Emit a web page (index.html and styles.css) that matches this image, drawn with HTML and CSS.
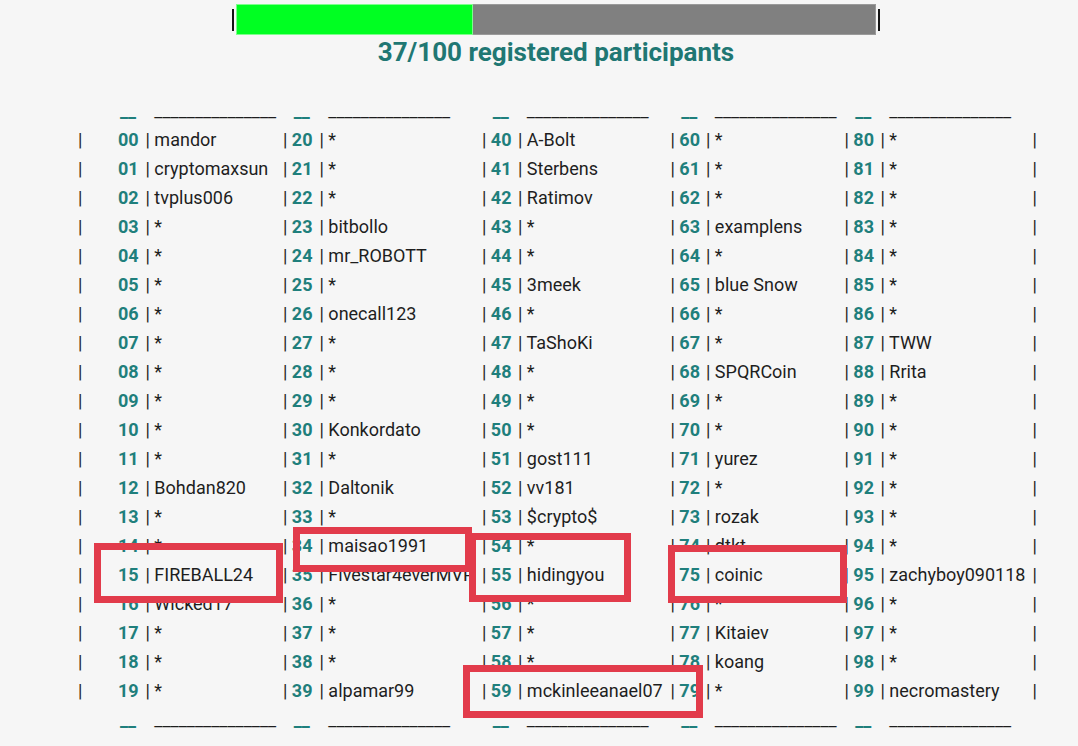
FILE: index.html
```html
<!DOCTYPE html>
<html>
<head>
<meta charset="utf-8">
<link rel="stylesheet" href="styles.css">
</head>
<body>
<div class="page">
  <div class="progress">
    <div class="tick"></div>
    <div class="bar"><div class="fill" style="width:37%"></div></div>
    <div class="tick"></div>
  </div>
  <div class="title">37/100 registered participants</div>
  <div class="board">
    <span></span><span class="n"><b class="u">__</b></span><span class="t"><i class="g">| </i>_______________</span><span class="n"><i class="g">| </i><b class="u">__</b></span><span class="t"><i class="g">| </i>_______________</span><span class="n"><i class="g">| </i><b class="u">__</b></span><span class="t"><i class="g">| </i>_______________</span><span class="n"><i class="g">| </i><b class="u">__</b></span><span class="t"><i class="g">| </i>_______________</span><span class="n"><i class="g">| </i><b class="u">__</b></span><span class="t"><i class="g">| </i>_______________</span><span></span>

    <span class="p">|</span><span class="n"><b>00</b></span><span class="t">| mandor</span><span class="n">| <b>20</b></span><span class="t">| *</span><span class="n">| <b>40</b></span><span class="t">| A-Bolt</span><span class="n">| <b>60</b></span><span class="t">| *</span><span class="n">| <b>80</b></span><span class="t">| *</span><span class="p">|</span>
    <span class="p">|</span><span class="n"><b>01</b></span><span class="t">| cryptomaxsun</span><span class="n">| <b>21</b></span><span class="t">| *</span><span class="n">| <b>41</b></span><span class="t">| Sterbens</span><span class="n">| <b>61</b></span><span class="t">| *</span><span class="n">| <b>81</b></span><span class="t">| *</span><span class="p">|</span>
    <span class="p">|</span><span class="n"><b>02</b></span><span class="t">| tvplus006</span><span class="n">| <b>22</b></span><span class="t">| *</span><span class="n">| <b>42</b></span><span class="t">| Ratimov</span><span class="n">| <b>62</b></span><span class="t">| *</span><span class="n">| <b>82</b></span><span class="t">| *</span><span class="p">|</span>
    <span class="p">|</span><span class="n"><b>03</b></span><span class="t">| *</span><span class="n">| <b>23</b></span><span class="t">| bitbollo</span><span class="n">| <b>43</b></span><span class="t">| *</span><span class="n">| <b>63</b></span><span class="t">| examplens</span><span class="n">| <b>83</b></span><span class="t">| *</span><span class="p">|</span>
    <span class="p">|</span><span class="n"><b>04</b></span><span class="t">| *</span><span class="n">| <b>24</b></span><span class="t">| mr_ROBOTT</span><span class="n">| <b>44</b></span><span class="t">| *</span><span class="n">| <b>64</b></span><span class="t">| *</span><span class="n">| <b>84</b></span><span class="t">| *</span><span class="p">|</span>
    <span class="p">|</span><span class="n"><b>05</b></span><span class="t">| *</span><span class="n">| <b>25</b></span><span class="t">| *</span><span class="n">| <b>45</b></span><span class="t">| 3meek</span><span class="n">| <b>65</b></span><span class="t">| blue Snow</span><span class="n">| <b>85</b></span><span class="t">| *</span><span class="p">|</span>
    <span class="p">|</span><span class="n"><b>06</b></span><span class="t">| *</span><span class="n">| <b>26</b></span><span class="t">| onecall123</span><span class="n">| <b>46</b></span><span class="t">| *</span><span class="n">| <b>66</b></span><span class="t">| *</span><span class="n">| <b>86</b></span><span class="t">| *</span><span class="p">|</span>
    <span class="p">|</span><span class="n"><b>07</b></span><span class="t">| *</span><span class="n">| <b>27</b></span><span class="t">| *</span><span class="n">| <b>47</b></span><span class="t">| TaShoKi</span><span class="n">| <b>67</b></span><span class="t">| *</span><span class="n">| <b>87</b></span><span class="t">| TWW</span><span class="p">|</span>
    <span class="p">|</span><span class="n"><b>08</b></span><span class="t">| *</span><span class="n">| <b>28</b></span><span class="t">| *</span><span class="n">| <b>48</b></span><span class="t">| *</span><span class="n">| <b>68</b></span><span class="t">| SPQRCoin</span><span class="n">| <b>88</b></span><span class="t">| Rrita</span><span class="p">|</span>
    <span class="p">|</span><span class="n"><b>09</b></span><span class="t">| *</span><span class="n">| <b>29</b></span><span class="t">| *</span><span class="n">| <b>49</b></span><span class="t">| *</span><span class="n">| <b>69</b></span><span class="t">| *</span><span class="n">| <b>89</b></span><span class="t">| *</span><span class="p">|</span>
    <span class="p">|</span><span class="n"><b>10</b></span><span class="t">| *</span><span class="n">| <b>30</b></span><span class="t">| Konkordato</span><span class="n">| <b>50</b></span><span class="t">| *</span><span class="n">| <b>70</b></span><span class="t">| *</span><span class="n">| <b>90</b></span><span class="t">| *</span><span class="p">|</span>
    <span class="p">|</span><span class="n"><b>11</b></span><span class="t">| *</span><span class="n">| <b>31</b></span><span class="t">| *</span><span class="n">| <b>51</b></span><span class="t">| gost111</span><span class="n">| <b>71</b></span><span class="t">| yurez</span><span class="n">| <b>91</b></span><span class="t">| *</span><span class="p">|</span>
    <span class="p">|</span><span class="n"><b>12</b></span><span class="t">| Bohdan820</span><span class="n">| <b>32</b></span><span class="t">| Daltonik</span><span class="n">| <b>52</b></span><span class="t">| vv181</span><span class="n">| <b>72</b></span><span class="t">| *</span><span class="n">| <b>92</b></span><span class="t">| *</span><span class="p">|</span>
    <span class="p">|</span><span class="n"><b>13</b></span><span class="t">| *</span><span class="n">| <b>33</b></span><span class="t">| *</span><span class="n">| <b>53</b></span><span class="t">| $crypto$</span><span class="n">| <b>73</b></span><span class="t">| rozak</span><span class="n">| <b>93</b></span><span class="t">| *</span><span class="p">|</span>
    <span class="p">|</span><span class="n"><b>14</b></span><span class="t">| *</span><span class="n">| <b>34</b></span><span class="t">| maisao1991</span><span class="n">| <b>54</b></span><span class="t">| *</span><span class="n">| <b>74</b></span><span class="t">| dtkt</span><span class="n">| <b>94</b></span><span class="t">| *</span><span class="p">|</span>
    <span class="p">|</span><span class="n"><b>15</b></span><span class="t">| FIREBALL24</span><span class="n">| <b>35</b></span><span class="t">| Fivestar4everMVP</span><span class="n">| <b>55</b></span><span class="t">| hidingyou</span><span class="n">| <b>75</b></span><span class="t">| coinic</span><span class="n">| <b>95</b></span><span class="t">| zachyboy090118</span><span class="p">|</span>
    <span class="p">|</span><span class="n"><b>16</b></span><span class="t">| Wicked17</span><span class="n">| <b>36</b></span><span class="t">| *</span><span class="n">| <b>56</b></span><span class="t">| *</span><span class="n">| <b>76</b></span><span class="t">| *</span><span class="n">| <b>96</b></span><span class="t">| *</span><span class="p">|</span>
    <span class="p">|</span><span class="n"><b>17</b></span><span class="t">| *</span><span class="n">| <b>37</b></span><span class="t">| *</span><span class="n">| <b>57</b></span><span class="t">| *</span><span class="n">| <b>77</b></span><span class="t">| Kitaiev</span><span class="n">| <b>97</b></span><span class="t">| *</span><span class="p">|</span>
    <span class="p">|</span><span class="n"><b>18</b></span><span class="t">| *</span><span class="n">| <b>38</b></span><span class="t">| *</span><span class="n">| <b>58</b></span><span class="t">| *</span><span class="n">| <b>78</b></span><span class="t">| koang</span><span class="n">| <b>98</b></span><span class="t">| *</span><span class="p">|</span>
    <span class="p">|</span><span class="n"><b>19</b></span><span class="t">| *</span><span class="n">| <b>39</b></span><span class="t">| alpamar99</span><span class="n">| <b>59</b></span><span class="t">| mckinleeanael07</span><span class="n">| <b>79</b></span><span class="t">| *</span><span class="n">| <b>99</b></span><span class="t">| necromastery</span><span class="p">|</span>

    <span></span><span class="n"><b class="u">__</b></span><span class="t"><i class="g">| </i>_______________</span><span class="n"><i class="g">| </i><b class="u">__</b></span><span class="t"><i class="g">| </i>_______________</span><span class="n"><i class="g">| </i><b class="u">__</b></span><span class="t"><i class="g">| </i>_______________</span><span class="n"><i class="g">| </i><b class="u">__</b></span><span class="t"><i class="g">| </i>_______________</span><span class="n"><i class="g">| </i><b class="u">__</b></span><span class="t"><i class="g">| </i>_______________</span><span></span>
  </div>

  <div class="mark mark-fireball"></div>
  <div class="mark mark-maisao"></div>
  <div class="mark mark-hiding"></div>
  <div class="mark mark-coinic"></div>
  <div class="mark mark-mckinlee"></div>
</div>
</body>
</html>
```

FILE: styles.css
```css
html, body {
  margin: 0;
  padding: 0;
  background: #f6f6f6;
}

.page {
  position: relative;
  width: 1078px;
  height: 746px;
  padding-left: 34px;
  padding-top: 4px;
  box-sizing: border-box;
  font-family: Roboto, "Liberation Sans", sans-serif;
  color: #1e1e1e;
  overflow: hidden;
}

.progress {
  display: flex;
  align-items: center;
  justify-content: center;
  gap: 2px;
}

.tick {
  width: 2px;
  height: 22px;
  background: #141414;
}

.bar {
  width: 640px;
  height: 31px;
  background: #808080;
  box-shadow: inset 0 0 0 1px #9a9a9a;
  display: flex;
}

.fill {
  height: 100%;
  background: #00ff22;
  box-shadow: inset 0 0 0 1px #7dff8c;
}

.title {
  margin-top: 2px;
  text-align: center;
  font-size: 26px;
  line-height: 30px;
  font-weight: 700;
  color: #207773;
}

.board {
  margin-top: 29px;
  margin-left: 44px;
  display: grid;
  grid-template-columns: 40px 27.5px 137.5px 36.5px 162.5px 36px 152.5px 35.5px 138.5px 36px 152px 10px;
  grid-auto-rows: 29px;
  font-size: 18px;
  line-height: 29px;
  white-space: nowrap;
}

.board > span {
  display: block;
  overflow: visible;
}

.board b {
  font-weight: 700;
  color: #1f7f7c;
}

.board .u {
  margin-left: 2px;
}

.board .g {
  font-style: normal;
  visibility: hidden;
}

.mark {
  position: absolute;
  border: 7px solid #e23b4b;
  box-sizing: border-box;
}

.mark-fireball { left: 94px;  top: 543px; width: 189px; height: 60px; }
.mark-maisao   { left: 293px; top: 527px; width: 179px; height: 45px; }
.mark-hiding   { left: 469px; top: 533px; width: 162px; height: 69px; }
.mark-coinic   { left: 668px; top: 545px; width: 179px; height: 58px; }
.mark-mckinlee { left: 463px; top: 665px; width: 240px; height: 53px; }
```
